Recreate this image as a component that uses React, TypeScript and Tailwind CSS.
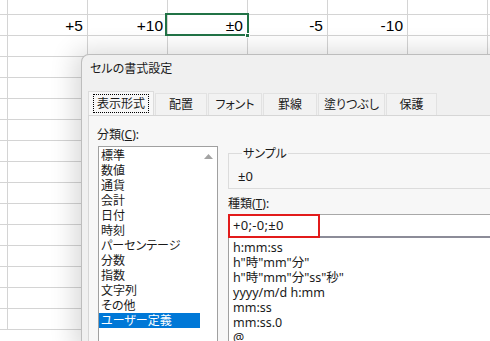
import React from 'react';

const colWidths = [8, 80, 80, 80, 80, 80, 80, 80];
const rowCount = 16;
const values: Record<number, string> = { 1: '+5', 2: '+10', 3: '±0', 4: '-5', 5: '-10' };

const categories = [
  '標準', '数値', '通貨', '会計', '日付', '時刻', 'パーセンテージ',
  '分数', '指数', '文字列', 'その他', 'ユーザー定義',
];

const formats = [
  'h:mm:ss',
  'h"時"mm"分"',
  'h"時"mm"分"ss"秒"',
  'yyyy/m/d h:mm',
  'mm:ss',
  'mm:ss.0',
  '@',
];

const tabs = [
  { label: '配置', w: 'w-[52px]' },
  { label: 'フォント', w: 'w-[54px]' },
  { label: '罫線', w: 'w-[54px]' },
  { label: '塗りつぶし', w: 'w-[67px]' },
  { label: '保護', w: 'w-[51px]' },
];

function Sheet() {
  return (
    <div className="flex flex-col font-['Liberation_Sans',sans-serif] text-[15.5px] text-black">
      {Array.from({ length: rowCount }).map((_, r) => (
        <div key={r} className={`flex ${r === 0 ? 'h-[15px]' : 'h-[21px]'}`}>
          {colWidths.map((w, c) => (
            <div
              key={c}
              style={{ width: w }}
              className="shrink-0 border-r border-b border-[#d4d4d4] flex items-end justify-end pr-[4px] leading-[18px]"
            >
              {r === 1 ? values[c] ?? '' : ''}
            </div>
          ))}
        </div>
      ))}
    </div>
  );
}

function Dialog() {
  return (
    <div className="absolute left-[81px] top-[54px] w-[440px] h-[300px] bg-[#f0f0f0] border-l border-t border-[#bdbdbd] rounded-tl-[8px] shadow-[-6px_-2px_26px_rgba(0,0,0,0.16)] font-['Noto_Sans','Noto_Sans_CJK_JP',sans-serif] text-[12px] text-[#1a1a1a] [font-feature-settings:'palt']">
      <div className="h-[28px] pl-[8px] flex items-center">セルの書式設定</div>

      <div className="mt-[8px] ml-[6px] flex items-end h-[24px]">
        <div className="w-[66px] h-[24px] bg-[#f7f7f7] border-l border-t border-r border-[#dcdcdc] flex items-center justify-center">
          <span className="border border-dotted border-black px-[3px] leading-[17px]">表示形式</span>
        </div>
        {tabs.map((t) => (
          <div
            key={t.label}
            className={`${t.w} h-[22px] ml-[1px] bg-[#f2f2f2] border-l border-t border-r border-[#e2e2e2] flex items-center justify-center`}
          >
            {t.label}
          </div>
        ))}
      </div>

      <div className="ml-[6px] h-[240px] bg-[#f7f7f7] border-l border-t border-[#d6d6d6] flex pt-[11px] pl-[8px]">
        <div className="w-[121px] flex flex-col">
          <div className="leading-[15px]">
            分類(<span className="underline">C</span>):
          </div>
          <div className="mt-[4px] ml-[1px] w-[120px] h-[200px] bg-white border border-[#a0a0a0] flex pt-[1px]">
            <div className="w-[101px] flex flex-col">
              {categories.map((c, i) => (
                <div
                  key={c}
                  className={`h-[15px] leading-[15px] pl-[2px] ${i === categories.length - 1 ? 'bg-[#0078d7] text-white' : ''}`}
                >
                  {c}
                </div>
              ))}
            </div>
            <div className="flex-1 flex items-start justify-center pt-[6px]">
              <svg width="9" height="5" viewBox="0 0 9 5" className="block">
                <path d="M0 5 L4.5 0 L9 5 Z" fill="#a3a3a3" />
              </svg>
            </div>
          </div>
        </div>

        <div className="ml-[10px] w-[280px] flex flex-col">
          <fieldset className="mt-[19px] h-[43px] border border-[#dcdcdc] pl-[9px]">
            <legend className="ml-[4px] px-[1px] leading-[15px]">サンプル</legend>
            <div className="mt-[8px] leading-[15px] text-[13px]">±0</div>
          </fieldset>

          <div className="mt-[7px] leading-[15px]">
            種類(<span className="underline">T</span>):
          </div>

          <div className="relative mt-[3px] h-[24px] bg-white border-t border-[#a8a8a8] border-b-2 border-b-[#8c8c98] flex items-center pl-[5px] text-[13px] tracking-[0.3px]">
            +0;-0;±0
            <div className="absolute left-0 top-[-1px] w-[92px] h-[24px] border-2 border-[#e21b1b]" />
          </div>

          <div className="h-[110px] bg-white border-l border-[#a0a0a0] pt-[2px] pl-[4px] flex flex-col text-[12.5px]">
            {formats.map((f) => (
              <div key={f} className="h-[15px] leading-[15px]">
                {f}
              </div>
            ))}
          </div>
        </div>
      </div>
    </div>
  );
}

export default function App() {
  return (
    <div className="relative w-[490px] h-[341px] overflow-hidden bg-white">
      <Sheet />
      <div className="absolute left-[165px] top-[13px] w-[84px] h-[23px] border-2 border-[#217346]" />
      <div className="absolute left-[245px] top-[33px] w-[5px] h-[5px] bg-[#217346] border border-white" />
      <Dialog />
    </div>
  );
}
